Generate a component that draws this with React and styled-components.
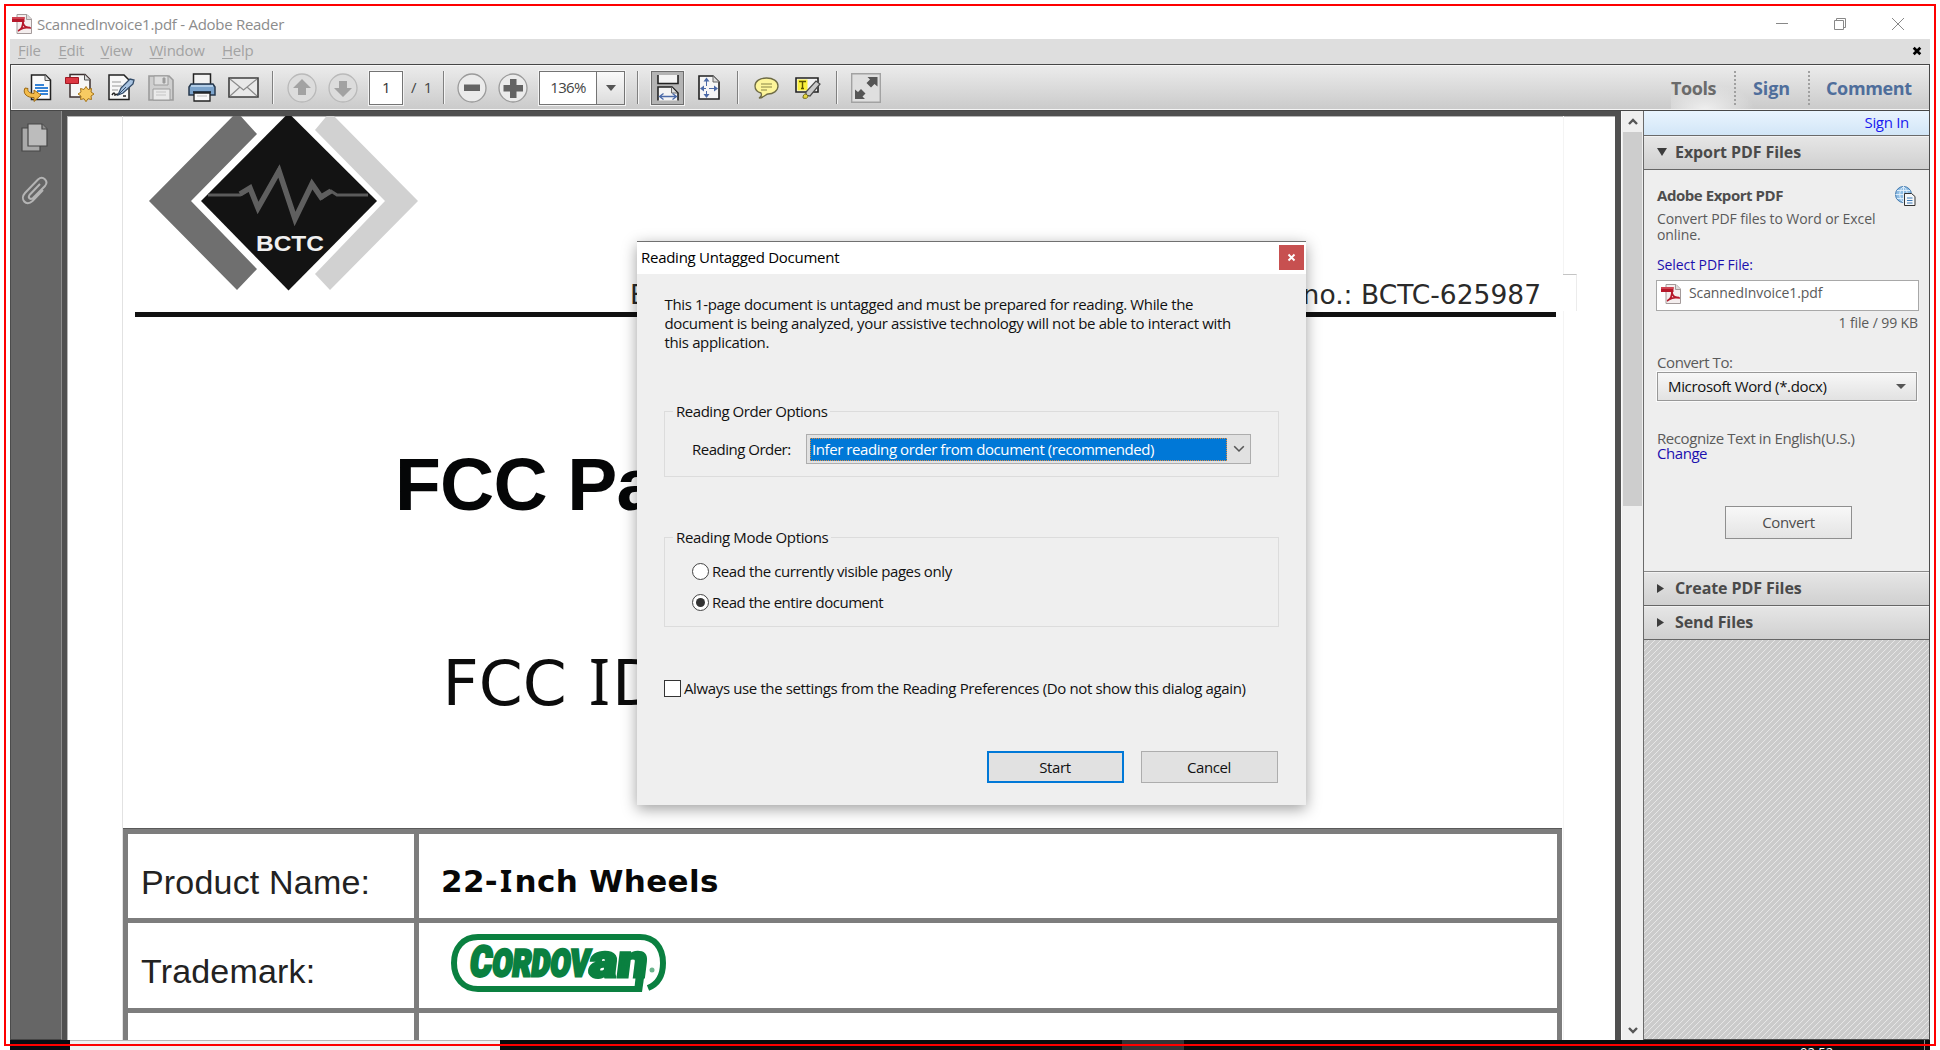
import React from 'react';
import styled, { createGlobalStyle } from 'styled-components';

const Global = createGlobalStyle`
  body { margin: 0; background: #fff; }
  * { box-sizing: border-box; }
  svg { display: block; flex: none; overflow: visible; }
`;

const ui = '"Open Sans", "Noto Sans", sans-serif';

const Screen = styled.div`
  position: relative;
  width: 1940px;
  height: 1050px;
  overflow: hidden;
  padding: 6px 10px 0;
  background: #fff;
  font: 15px/19px ${ui};
  letter-spacing: -0.37px;
  color: #111;
  white-space: nowrap;
`;

const RedFrame = styled.div`
  position: absolute;
  left: 4px;
  top: 4px;
  width: 1932px;
  height: 1042px;
  border: 2px solid #fe0000;
`;

const Window = styled.div`
  display: flex;
  flex-direction: column;
  width: 1920px;
  height: 1034px;
`;

const TitleBar = styled.div`
  display: flex;
  align-items: center;
  height: 33px;
  padding: 3px 26px 0 2px;
  color: #8c8c8c;
  letter-spacing: -0.28px;
`;
const TitleText = styled.span`
  margin-left: 5px;
  flex: 1;
`;
const WindowButtons = styled.div`
  display: flex;
  align-items: center;
  gap: 46px;
`;

const MenuBar = styled.div`
  display: flex;
  align-items: center;
  height: 25px;
  padding: 0 9px 1px 8px;
  background: #dedede;
  color: #a3a3a3;
`;
const MenuItem = styled.span`
  width: ${(p) => p.$w}px;
  letter-spacing: -0.25px;
  padding-bottom: 2px;
  u { text-decoration-thickness: 1px; text-underline-offset: 2px; }
`;
const CloseDoc = styled.svg`
  margin-left: auto;
`;

const Toolbar = styled.div`
  display: flex;
  align-items: center;
  height: 47px;
  border: 1px solid #474747;
  box-shadow: inset 1px 1px #f8f8f8, inset 0 -1px #f5f5f5;
  background: linear-gradient(#ececec, #cacaca);
  padding-left: 11px;
`;
const Tool = styled.div`
  display: flex;
  justify-content: center;
  align-items: center;
  width: ${(p) => p.$w || 30}px;
  height: 33px;
  margin-left: ${(p) => p.$gap || 0}px;
`;
const Divider = styled.div`
  width: 2px;
  height: 33px;
  margin-left: ${(p) => p.$gap}px;
  background: #808080;
  border-right: 1px solid #f4f4f4;
`;
const PageBox = styled.div`
  width: 34px;
  height: 34px;
  margin-left: ${(p) => p.$gap}px;
  border: 1px solid #747474;
  box-shadow: 0 0 0 1px #f3f3f3;
  background: #fff;
  text-align: center;
  line-height: 31px;
  color: #333;
`;
const PageCount = styled.span`
  margin-left: 8px;
  width: 24px;
  color: #444;
  word-spacing: 4px;
`;
const ZoomBox = styled.div`
  display: flex;
  width: 86px;
  height: 34px;
  margin-left: 11px;
  border: 1px solid #747474;
  box-shadow: 0 0 0 1px #f3f3f3;
  background: #fff;
  color: #444;
`;
const ZoomValue = styled.div`
  width: 57px;
  border-right: 1px solid #747474;
  text-align: center;
  line-height: 31px;
  letter-spacing: -0.7px;
`;
const ZoomArrow = styled.div`
  flex: 1;
  display: flex;
  align-items: center;
  justify-content: center;
  background: linear-gradient(#fafafa, #dcdcdc);
`;
const Pressed = styled.div`
  display: flex;
  align-items: center;
  justify-content: center;
  width: 33px;
  height: 34px;
  margin-left: 12px;
  border: 1px solid #6e6e6e;
  box-shadow: 0 0 0 1px #f3f3f3;
  background: #b4b4b4;
`;
const PaneTabs = styled.div`
  display: flex;
  align-items: center;
  margin-left: auto;
  height: 44px;
  background: radial-gradient(ellipse 50px 26px at 34px 44px, #f0f0f0, rgba(240, 240, 240, 0));
`;
const PaneTab = styled.div`
  width: ${(p) => p.$w}px;
  padding-left: ${(p) => p.$pad}px;
  height: 34px;
  line-height: 35px;
  font-size: 18px;
  font-weight: 700;
  letter-spacing: ${(p) => p.$ls}px;
  color: ${(p) => (p.$active ? '#6b6b6b' : '#4f6e9b')};
  border-left: ${(p) => (p.$active ? '0' : '2px dotted #a0a0a0')};
`;

const Workspace = styled.div`
  display: flex;
  height: 929px;
`;
const NavRail = styled.div`
  display: flex;
  flex-direction: column;
  align-items: center;
  width: 52px;
  padding: 11px 4px 0 0;
  gap: 24px;
  background: #666;
  border-left: 1px solid #4b4b4b;
  border-right: 1px solid #8d8d8d;
  border-bottom: 1px solid #444;
`;
const DocFrame = styled.div`
  display: flex;
  width: 1559px;
  border-style: solid;
  border-color: #505050;
  border-width: 5px 6px 0 5px;
  box-shadow: inset 1px 1px #b5b5b5;
  overflow: hidden;
  background: #fff;
  position: relative;
  padding-left: 55px;
`;
const Page = styled.div`
  width: 1442px;
  height: 924px;
  border-left: 1px solid #e2e2e2;
  border-right: 1px solid #f4f4f4;
  letter-spacing: 0;
`;
const Notch = styled.div`
  position: absolute;
  left: 1496px;
  top: 158px;
  width: 14px;
  height: 37px;
  background: #fff;
  border-top: 1px solid #c4c4c4;
  border-right: 1px solid #ececec;
`;
const Letterhead = styled.div`
  display: flex;
  height: 201px;
  margin: 0 7px 0 12px;
  padding-left: 14px;
  border-bottom: 5px solid #111;
`;
const ReportNo = styled.div`
  display: flex;
  flex: 1;
  justify-content: space-between;
  padding: 163px 15px 0 212px;
  font: 26.5px/32px "DejaVu Sans", sans-serif;
  color: #2a2a2a;
`;
const Heading = styled.div`
  margin: 122px 0 0 272px;
  font: 700 75px/90px "Liberation Sans", Arial, sans-serif;
  letter-spacing: -0.7px;
  color: #050607;
`;
const SubHeading = styled.div`
  margin: 114px 0 0 319.500px;
  height: 75px;
  font: 63px/75px "DejaVu Sans", sans-serif;
  color: #0c0c0c;
`;
const SerifI = styled.span`
  font-family: "Noto Sans", sans-serif;
  padding: 0 ${(p) => p.$pad}px;
`;
const SpecTable = styled.div`
  display: grid;
  grid-template-columns: 286px 1138px;
  grid-template-rows: 84px 85px 60px;
  gap: 5px;
  width: 1439px;
  margin: 110px 0 0 0;
  padding: 5px 5px 0 5px;
  background: #7d7d7d;
  border-top: 1px solid #5a5a5a;
`;
const Cell = styled.div`
  background: #fff;
  padding: 28px 0 0 ${(p) => (p.$value ? 22 : 13)}px;
  color: #222;
  font: 34px/40px "Liberation Sans", Arial, sans-serif;
  letter-spacing: 0.18px;
`;
const BoldValue = styled.div`
  margin-top: -1px;
  font: 700 31px/38px "DejaVu Sans", sans-serif;
  letter-spacing: 0.35px;
  color: #080808;
`;
const Brand = styled.div`
  margin: -17px 0 0 10px;
`;

const ScrollBar = styled.div`
  display: flex;
  flex-direction: column;
  align-items: center;
  width: 23px;
  background: #efefef;
  border-right: 1px solid #6a6a6a;
  border-left: 1px solid #fafafa;
`;
const ScrollArrow = styled.div`
  display: flex;
  align-items: center;
  justify-content: center;
  height: 21px;
`;
const ScrollThumb = styled.div`
  width: 19px;
  height: 374px;
  background: #cdcdcd;
  margin-bottom: auto;
`;

const TaskPane = styled.div`
  display: flex;
  flex-direction: column;
  width: 286px;
  background: #eee;
  border-right: 1px solid #4d4d4d;
  border-bottom: 1px solid #4d4d4d;
  color: #4d4d4d;
`;
const SignIn = styled.div`
  height: 25px;
  padding-right: 20px;
  text-align: right;
  line-height: 23px;
  color: #1a1af0;
  letter-spacing: -0.3px;
  background: linear-gradient(#e9f4fe, #d2e6f7);
  border-bottom: 1px solid #6a6a6a;
`;
const Section = styled.div`
  display: flex;
  align-items: center;
  gap: ${(p) => (p.$open ? 8 : 11)}px;
  flex: none;
  height: 34px;
  padding: 0 0 1px 13px;
  font-size: 16px;
  font-weight: 700;
  letter-spacing: -0.08px;
  color: #4a4a4a;
  background: linear-gradient(#e6e6e6, #d0d0d0);
  border-bottom: 1px solid #666;
  box-shadow: inset 0 1px #f2f2f2;
`;
const PaneBody = styled.div`
  display: flex;
  flex-direction: column;
  height: 402px;
  padding: 16px 11px 0 13px;
  border-bottom: 1px solid #8a8a8a;
`;
const PaneHead = styled.div`
  display: flex;
  justify-content: space-between;
  height: 25px;
  font-weight: 700;
  letter-spacing: -0.45px;
  padding-right: 2px;
`;
const Small = styled.div`
  font-size: 14px;
  line-height: 16px;
  letter-spacing: -0.1px;
  margin-top: ${(p) => p.$mt || 0}px;
  text-align: ${(p) => p.$align || 'left'};
  color: ${(p) => (p.$link ? '#1c10ae' : '#5a5a5a')};
`;
const Label = styled.div`
  line-height: 15px;
  letter-spacing: ${(p) => p.$ls || -0.42}px;
  margin-top: ${(p) => p.$mt || 0}px;
  color: ${(p) => (p.$link ? '#1c10ae' : '#5a5a5a')};
`;
const FileBox = styled.div`
  display: flex;
  gap: 8px;
  height: 31px;
  width: 263px;
  margin: 7px 0 0 -1px;
  padding: 3px 4px;
  border: 1px solid #a8a8a8;
  background: #fff;
`;
const FormatSelect = styled.div`
  display: flex;
  align-items: center;
  justify-content: space-between;
  width: 260px;
  height: 29px;
  margin: 2px 0 0 0;
  padding: 0 10px 1px 10px;
  border: 1px solid #989898;
  box-shadow: 0 0 0 1px #fafafa;
  background: linear-gradient(#f7f7f7, #e2e2e2);
  color: #111;
  letter-spacing: -0.34px;
`;
const ConvertButton = styled.div`
  width: 127px;
  height: 33px;
  margin: 45px 0 0 68px;
  border: 1px solid #8f8f8f;
  background: linear-gradient(#f8f8f8, #e4e4e4);
  text-align: center;
  line-height: 31px;
`;
const Hatch = styled.div`
  flex: 1;
  background: repeating-linear-gradient(135deg, #cbcbcb 0 2.9px, #e6e6e6 3.3px 3.9px, #cbcbcb 4.243px);
`;

const Taskbar = styled.div`
  display: flex;
  width: 1920px;
  height: 10px;
  background: #0b0b0c;
  overflow: hidden;
`;
const TaskStart = styled.div` width: 60px; background: #080b12; `;
const TaskSearch = styled.div` width: 430px; background: #f1f1f1; border-top: 1px solid #b8b8b8; `;
const TaskActive = styled.div` width: 62px; margin-left: 622px; background: #343436; `;
const Clock = styled.div`
  margin-left: 616px;
  width: 124px;
  font-size: 13px;
  line-height: 18px;
  padding-top: 3px;
  letter-spacing: 0;
  color: #fff;
`;
const PeekLine = styled.div` width: 1px; background: #8a8a8a; `;

const Dialog = styled.div`
  position: absolute;
  left: 637px;
  top: 241px;
  width: 669px;
  height: 564px;
  display: flex;
  flex-direction: column;
  background: #efefef;
  border-top: 1px solid #707070;
  box-shadow: 0 4px 14px rgba(0, 0, 0, 0.38);
`;
const DialogTitle = styled.div`
  display: flex;
  justify-content: space-between;
  height: 32px;
  padding: 3px 2px 0 4px;
  background: #fff;
  color: #000;
  line-height: 25px;
  letter-spacing: -0.27px;
`;
const CloseBox = styled.div`
  display: flex;
  align-items: center;
  justify-content: center;
  width: 25px;
  height: 25px;
  background: #c75050;
`;
const DialogBody = styled.div`
  display: flex;
  flex-direction: column;
  padding: 21px 27px 0 27px;
`;
const Message = styled.div`
  height: 107px;
  padding-left: 0.5px;
  letter-spacing: -0.35px;
`;
const Group = styled.fieldset`
  height: ${(p) => p.$h}px;
  margin: 0 0 ${(p) => p.$mb}px;
  padding: ${(p) => p.$pt}px 0 0 27px;
  border: 1px solid #dcdcdc;
  legend {
    margin-left: -19px;
    padding: 0 3px;
    line-height: 19px;
    letter-spacing: ${(p) => p.$ls}px;
  }
`;
const FieldRow = styled.div`
  display: flex;
  align-items: center;
`;
const FieldLabel = styled.span`
  width: 114px;
  letter-spacing: -0.5px;
`;
const Combo = styled.div`
  display: flex;
  align-items: center;
  width: 445px;
  height: 30px;
  padding: 2px 5px 2px 3px;
  border: 1px solid #adadad;
  background: #e1e1e1;
  justify-content: space-between;
`;
const ComboValue = styled.div`
  width: 417px;
  height: 23px;
  padding-left: 1px;
  border: 1px dotted #e08a3c;
  background: #0078d7;
  color: #fff;
  line-height: 20px;
  letter-spacing: -0.42px;
`;
const Choice = styled.div`
  display: flex;
  align-items: center;
  gap: 3px;
  height: 21px;
  margin-bottom: ${(p) => p.$mb || 0}px;
  letter-spacing: ${(p) => p.$ls || -0.41}px;
`;
const Radio = styled.span`
  display: flex;
  align-items: center;
  justify-content: center;
  width: 17px;
  height: 17px;
  border: 1px solid #444;
  border-radius: 50%;
  background: #fff;
  &::after {
    content: '';
    width: 9px;
    height: 9px;
    border-radius: 50%;
    background: ${(p) => (p.$on ? '#333' : 'transparent')};
  }
`;
const Check = styled.span`
  width: 17px;
  height: 17px;
  border: 1px solid #333;
  background: #fff;
`;
const Buttons = styled.div`
  display: flex;
  justify-content: flex-end;
  gap: 17px;
  margin-top: 52px;
  padding-right: 1px;
`;
const Button = styled.div`
  width: 137px;
  height: 32px;
  padding-right: 1px;
  border: ${(p) => (p.$primary ? '2px solid #0078d7' : '1px solid #adadad')};
  background: #e1e1e1;
  text-align: center;
  line-height: ${(p) => (p.$primary ? 28 : 30)}px;
  letter-spacing: -0.4px;
`;

const PdfIcon = ({ s = 20 }) => (
  <svg width={s} height={s} viewBox="0 0 20 20">
    <path d="M5 .5h10l4.500 4.500v14.500H5z" fill="#f4eeee" stroke="#a39a9a" />
    <path d="M14.500.5v5h5" fill="#ddd" stroke="#a39a9a" />
    <path d="M0 3h12.500v5H0z" fill="#b5182a" />
    <path d="M0 3h12.500v2H0z" fill="#cf4452" />
    <path d="M6 17c3-1 5-5 5-10M11 8c0 4 3 6 8 6M7 16c3-2 7-3 11-2.500" fill="none" stroke="#b5182a" strokeWidth="1.700" />
  </svg>
);

const ExportIcon = () => (
  <svg width="29" height="28" viewBox="0 0 29 28">
    <path d="M8.500 1h14l5 5v19.500h-19z" fill="#fbfbfb" stroke="#222" strokeWidth="1.500" />
    <path d="M22 1v5.500h5" fill="#ddd" stroke="#555" />
    <path d="M12 11h9M12 14h13M14 17h11M17 20h8" stroke="#3583d6" strokeWidth="2" />
    <path d="M2 14c-3 6 3 10 9 9.500v4l7-6.500-7-5v3.500c-4 0-7-2-6-5z" fill="#f3bb49" stroke="#9a6813" />
  </svg>
);
const CreateIcon = () => (
  <svg width="29" height="29" viewBox="0 0 29 29">
    <path d="M5 1.500h15l5 5V24H5z" fill="#f6f6f6" stroke="#3d3030" strokeWidth="1.500" />
    <path d="M19.500 1.500V7H25" fill="#ddd" stroke="#555" />
    <path d="M.5 4.500h13v6H.5z" fill="#dc3742" stroke="#a01822" />
    <path d="M21 13.500l2 3 3.500-1 -.500 3.500 3 2-3 2 .5 3.500-3.500-.8-2 3-2-3-3.500.8.500-3.500-3-2 3-2-.5-3.500 3.500 1z" fill="#f8cb62" stroke="#a77418" />
  </svg>
);
const SignIcon = () => (
  <svg width="27" height="27" viewBox="0 0 27 27">
    <path d="M1 1h15l5 5v19.500H1z" fill="#f8f8f8" stroke="#222" strokeWidth="1.500" />
    <path d="M4 8h9M4 12h10M4 16h6" stroke="#b8b8b8" strokeWidth="1.300" />
    <path d="M4 21c2-3 3-2 3 0l3-1M15 22h3" fill="none" stroke="#222" strokeWidth="1.500" />
    <path d="M10 21l3-7L22 5l4 1-1 4-10 9z" fill="#a9c4e2" stroke="#334c69" strokeWidth="1.300" />
    <path d="M10 21l8-8" stroke="#334c69" />
  </svg>
);
const SaveIcon = () => (
  <svg width="26" height="26" viewBox="0 0 26 26" fill="#cfcfcf" stroke="#9c9c9c">
    <path d="M1 1h20l4 4v20H1z" strokeWidth="1.600" />
    <path d="M6 1h14v9H6z" fill="#dedede" />
    <path d="M15 3h2v5h-2z" fill="#9c9c9c" />
    <path d="M5 14h17v11H5z" fill="#eaeaea" />
    <path d="M8 17h10M8 20h10" stroke="#c4c4c4" />
  </svg>
);
const PrintIcon = () => (
  <svg width="28" height="29" viewBox="0 0 28 29">
    <path d="M5.500 1h17v13h-17z" fill="#f2f2f2" stroke="#222" strokeWidth="1.500" />
    <path d="M3 11h22l2 3v8H1v-8z" fill="#7ba3cb" stroke="#27394d" strokeWidth="1.500" />
    <path d="M3 13h22" stroke="#c5dbf0" strokeWidth="1.500" />
    <path d="M5 18h18v2H5z" fill="#26384b" />
    <path d="M6 20h16v8H6z" fill="#fafafa" stroke="#222" strokeWidth="1.300" />
    <path d="M9 23h10" stroke="#bbb" />
  </svg>
);
const MailIcon = () => (
  <svg width="31" height="21" viewBox="0 0 31 21">
    <path d="M1 1h29v19H1z" fill="#e9e9e9" stroke="#3f3f3f" strokeWidth="1.600" />
    <path d="M2 19l10-9M29 19l-10-9M2 2l13.500 11L29 2" fill="none" stroke="#8b8b8b" strokeWidth="1.200" />
  </svg>
);
const RoundIcon = ({ dim, children }) => (
  <svg width="30" height="30" viewBox="0 0 30 30">
    <circle cx="15" cy="15" r="14" fill={dim ? '#dcdcdc' : '#ebebeb'} stroke={dim ? '#b9b9b9' : '#9a9a9a'} strokeWidth="1.300" />
    {children}
  </svg>
);
const FitWidthIcon = () => (
  <svg width="22" height="26" viewBox="0 0 22 26">
    <path d="M1 0v8.500h20V0" fill="#f4f4f4" stroke="#222" strokeWidth="1.600" />
    <path d="M1 25.500V12h14l6 6v7.500" fill="#f4f4f4" stroke="#222" strokeWidth="1.600" />
    <path d="M14.500 12v6H20" fill="#ddd" stroke="#666" />
    <path d="M3 21.500h16M6.500 18.500l-4 3 4 3M15.500 18.500l4 3-4 3" fill="none" stroke="#4b6aa8" strokeWidth="1.300" />
  </svg>
);
const FitPageIcon = () => (
  <svg width="22" height="25" viewBox="0 0 22 25">
    <path d="M1 1h14l6 6v17H1z" fill="#f6f6f6" stroke="#222" strokeWidth="1.600" />
    <path d="M15 1v6h6" fill="#ddd" stroke="#666" />
    <g fill="#4b6aa8">
      <path d="M8.500 2.500l3 4h-6zM8.500 23l3-4h-6zM2 13.500l4-3v6zM20 13.500l-4-3v6z" />
      <path d="M8 6h1v5H8zM8 16h1v3H8zM5 13h3v1H5zM11 13h5v1h-5z" />
    </g>
  </svg>
);
const CommentIcon = () => (
  <svg width="25" height="22" viewBox="0 0 25 22">
    <path d="M12.500 1C19 1 24 4 24 9s-5 8-10 8c-2 0-4 4-9 4 2-1 3-3 2-5-4-1-6-4-6-7 0-5 5-8 11.500-8z" fill="#fdf59a" stroke="#6e6b45" strokeWidth="1.300" />
    <path d="M7 7h11M7 10h11M7 13h6" stroke="#8a8546" strokeWidth="1.200" />
  </svg>
);
const HighlightIcon = () => (
  <svg width="26" height="24" viewBox="0 0 26 24">
    <path d="M1 2h22v14H1z" fill="#f3f3f3" stroke="#222" strokeWidth="1.600" />
    <path d="M2.500 3.500h10v11h-10z" fill="#fbf03a" />
    <path d="M4 5.500h7M7.500 5.500v7M6 12.500h3" stroke="#5c5500" strokeWidth="1.400" />
    <path d="M11 16L21 5l4 3-10 12-4-1z" fill="#c9c9c9" stroke="#4b4b4b" strokeWidth="1.200" />
    <path d="M8 22c0-3 1-4 3-4l2 2c0 2-2 3-5 2z" fill="#e8d640" stroke="#77701a" />
  </svg>
);
const FullScreenIcon = () => (
  <svg width="30" height="30" viewBox="0 0 30 30">
    <path d="M.7.700h28.600v28.600H.7z" fill="#dfdfdf" stroke="#a2a2a2" strokeWidth="1.400" />
    <path d="M26.500 4v9.500l-3-2.500-3.500 3.500-4.500-4.500 3.500-3.500-2.500-2.500zM4 26v-9.500l3 2.500 3-3 4.500 4.500-3 3 2.500 2.500z" fill="#555" />
  </svg>
);
const PagesIcon = () => (
  <svg width="27" height="30" viewBox="0 0 27 30" fill="#a9a9a9" stroke="#474747" strokeWidth="1.200">
    <path d="M1 6h18v23H1z" />
    <path d="M7 2h14l5 5v17H7z" fill="#bcbcbc" />
    <path d="M21 2v5h5" fill="#8e8e8e" />
  </svg>
);
const ClipIcon = () => (
  <svg width="27" height="30" viewBox="0 0 27 30">
    <path
      d="M19 8L8.500 19c-2 3 1 5 3.500 3L24 10c4-5-2-11-7-6.500L4 17C-1.500 23 5 31 11.500 25L22 14"
      fill="none" stroke="#b4b4b4" strokeWidth="2"
    />
  </svg>
);
const GlobeIcon = () => (
  <svg width="21" height="20" viewBox="0 0 21 20">
    <circle cx="8.500" cy="8.500" r="8" fill="#8fbde4" stroke="#4279ae" />
    <path d="M8.500.5v16M.5 8.500h16M2 4.500h13M2 12.500h13M8.500.5c-5 4-5 12 0 16M8.500.5c5 4 5 12 0 16" fill="none" stroke="#e4f2fc" strokeWidth=".9" />
    <path d="M9.500 7.500h7l3.500 3v9H9.500z" fill="#f4f7fa" stroke="#333" />
    <path d="M12 12h5.500M12 14.500h5.500M12 17h5.500" stroke="#3c7ab7" />
  </svg>
);
const Chevron = ({ up, w = 10, c = '#555', t = 2.4 }) => (
  <svg width={w} height={w * 0.6} viewBox="0 0 10 6">
    <path d={up ? 'M1 5l4-4 4 4' : 'M1 1l4 4 4-4'} fill="none" stroke={c} strokeWidth={t} />
  </svg>
);
const Triangle = ({ down, w = 11, h = 8, c = '#3c3c3c' }) => (
  <svg width={w} height={h} viewBox="0 0 10 10" preserveAspectRatio="none">
    <path d={down ? 'M0 0h10L5 10z' : 'M0 0v10l10-5z'} fill={c} />
  </svg>
);

const LabLogo = () => (
  <svg width="269" height="175" viewBox="149 116 269 175">
    <path d="M237 112l20 22-66 67 66 68-20 21-88-89z" fill="#6f6f6f" />
    <path d="M330 112l-15 18 70 71-70 73 15 16 88-89z" fill="#d1d1d1" />
    <path d="M288.500 113l88.500 88-88.500 89.500L201 201z" fill="#131313" />
    <path d="M208 195h32l10-6 8 19 21-39 16 50 17-34 10 13 9-7 6 4h31" fill="none" stroke="#5b5b5b" strokeWidth="3" />
    <path d="M240 194l10-6 8 20 21-37 16 48 17-35 9 13 10-6" fill="none" stroke="#5f5f5f" strokeWidth="5.500" />
    <text x="256" y="251" textLength="68" lengthAdjust="spacingAndGlyphs" fontFamily="Liberation Sans, Arial, sans-serif" fontWeight="700" fontSize="22" fill="#f0f0f0">BCTC</text>
  </svg>
);
const CordovanLogo = () => (
  <svg width="216" height="59" viewBox="0 0 216 59">
    <path d="M197 54C207 50 212 41 212 29 212 13 203 3 189 3H27C12 3 3 14 3 29s9 26 24 26h160" fill="none" stroke="#0a8040" strokeWidth="6" />
    <g transform="skewX(-7)" fontFamily="Roboto, sans-serif" fontWeight="900" fill="#0a8040" stroke="#0a8040" strokeWidth="3">
      <text x="23" y="42.500" fontSize="42" textLength="22" lengthAdjust="spacingAndGlyphs">C</text>
      <text x="45.500" y="42.500" fontSize="37" textLength="97" lengthAdjust="spacingAndGlyphs">ORDOV</text>
      <text x="142" y="42.500" fontSize="46" textLength="58" lengthAdjust="spacingAndGlyphs">an</text>
    </g>
    <path d="M186 30h9l-4 28h-8z" fill="#0a8040" />
    <circle cx="201" cy="36" r="2.500" fill="#6cb48d" />
  </svg>
);

const menus = [['File', 40.5], ['Edit', 42], ['View', 49], ['Window', 72.5], ['Help', 40]];

export default function App() {
  return (
    <Screen>
      <Global />
      <Window>
        <TitleBar>
          <PdfIcon />
          <TitleText>ScannedInvoice1.pdf - Adobe Reader</TitleText>
          <WindowButtons>
            <svg width="12" height="12" viewBox="0 0 12 12"><path d="M0 5.500h12" stroke="#888" /></svg>
            <svg width="12" height="12" viewBox="0 0 12 12" fill="none" stroke="#888"><path d="M.5 2.500h9v9h-9zM2.500 2.500v-2h9v9h-2" /></svg>
            <svg width="12" height="12" viewBox="0 0 12 12"><path d="M0 0l12 12M12 0L0 12" stroke="#888" /></svg>
          </WindowButtons>
        </TitleBar>
        <MenuBar>
          {menus.map(([name, w]) => (
            <MenuItem key={name} $w={w}><u>{name[0]}</u>{name.slice(1)}</MenuItem>
          ))}
          <CloseDoc width="8" height="8" viewBox="0 0 8 8"><path d="M.7.700l6.600 6.600M7.300.7L.7 7.300" stroke="#000" strokeWidth="2.700" /></CloseDoc>
        </MenuBar>
        <Toolbar>
          <Tool $w={30}><ExportIcon /></Tool>
          <Tool $gap={12}><CreateIcon /></Tool>
          <Tool $gap={12}><SignIcon /></Tool>
          <Tool $gap={10}><SaveIcon /></Tool>
          <Tool $gap={11}><PrintIcon /></Tool>
          <Tool $gap={11}><MailIcon /></Tool>
          <Divider $gap={14} />
          <Tool $gap={13}><RoundIcon dim><path d="M15 6l9 9h-5v7h-8v-7H6z" fill="#a2a2a2" /></RoundIcon></Tool>
          <Tool $gap={11}><RoundIcon dim><path d="M15 24l9-9h-5V8h-8v7H6z" fill="#a2a2a2" /></RoundIcon></Tool>
          <PageBox $gap={11}>1</PageBox>
          <PageCount>/ 1</PageCount>
          <Divider $gap={8} />
          <Tool $gap={12}><RoundIcon><path d="M7 11.500h16v6.500H7z" fill="#636363" /></RoundIcon></Tool>
          <Tool $gap={11}><RoundIcon><path d="M12 6h6.500v6H25v6.500h-6.500V25H12v-6.500H5.500V12H12z" fill="#636363" /></RoundIcon></Tool>
          <ZoomBox>
            <ZoomValue>136%</ZoomValue>
            <ZoomArrow><Triangle down w={10} h={6} c="#555" /></ZoomArrow>
          </ZoomBox>
          <Divider $gap={12} />
          <Pressed><FitWidthIcon /></Pressed>
          <Tool $gap={10}><FitPageIcon /></Tool>
          <Divider $gap={13} />
          <Tool $gap={12}><CommentIcon /></Tool>
          <Tool $gap={12}><HighlightIcon /></Tool>
          <Divider $gap={13} />
          <Tool $gap={13}><FullScreenIcon /></Tool>
          <PaneTabs>
            <PaneTab $active $w={63} $pad={0} $ls={-0.4}>Tools</PaneTab>
            <PaneTab $w={74} $pad={17} $ls={-0.1}>Sign</PaneTab>
            <PaneTab $w={121} $pad={16} $ls={-0.35}>Comment</PaneTab>
          </PaneTabs>
        </Toolbar>
        <Workspace>
          <NavRail><PagesIcon /><ClipIcon /></NavRail>
          <DocFrame>
            <Page>
              <Letterhead>
                <LabLogo />
                <ReportNo><span>E</span><span>no.: BCTC-625987</span></ReportNo>
              </Letterhead>
              <Heading>FCC Pa</Heading>
              <SubHeading>FCC <SerifI $pad={2}>I</SerifI>D</SubHeading>
              <SpecTable>
                <Cell>Product Name:</Cell>
                <Cell $value><BoldValue>22-<SerifI $pad={2}>I</SerifI>nch Wheels</BoldValue></Cell>
                <Cell>Trademark:</Cell>
                <Cell $value><Brand><CordovanLogo /></Brand></Cell>
                <Cell />
                <Cell />
              </SpecTable>
            </Page>
            <Notch />
          </DocFrame>
          <ScrollBar>
            <ScrollArrow><Chevron up /></ScrollArrow>
            <ScrollThumb />
            <ScrollArrow><Chevron /></ScrollArrow>
          </ScrollBar>
          <TaskPane>
            <SignIn>Sign In</SignIn>
            <Section $open><Triangle down w={10} h={8} />Export PDF Files</Section>
            <PaneBody>
              <PaneHead>Adobe Export PDF<GlobeIcon /></PaneHead>
              <Small>Convert PDF files to Word or Excel<br />online.</Small>
              <Small $mt={14} $link>Select PDF File:</Small>
              <FileBox><PdfIcon /><Small $mt={1}>ScannedInvoice1.pdf</Small></FileBox>
              <Small $mt={4} $align="right">1 file / 99 KB</Small>
              <Label $mt={24}>Convert To:</Label>
              <FormatSelect>Microsoft Word (*.docx)<Triangle down w={10} h={5} c="#555" /></FormatSelect>
              <Label $mt={30}>Recognize Text in English(U.S.)</Label>
              <Label $link $ls={-0.45}>Change</Label>
              <ConvertButton>Convert</ConvertButton>
            </PaneBody>
            <Section><Triangle w={7} h={9} />Create PDF Files</Section>
            <Section><Triangle w={7} h={9} />Send Files</Section>
            <Hatch />
          </TaskPane>
        </Workspace>
      </Window>
      <Taskbar>
        <TaskStart />
        <TaskSearch />
        <TaskActive />
        <Clock>02:52</Clock>
        <PeekLine />
      </Taskbar>

      <Dialog>
        <DialogTitle>
          Reading Untagged Document
          <CloseBox>
            <svg width="7" height="7" viewBox="0 0 7 7"><path d="M.5.500l6 6M6.500.5l-6 6" stroke="#fff" strokeWidth="1.900" /></svg>
          </CloseBox>
        </DialogTitle>
        <DialogBody>
          <Message>
            This 1-page document is untagged and must be prepared for reading. While the<br />
            document is being analyzed, your assistive technology will not be able to interact with<br />
            this application.
          </Message>
          <Group $h={75} $mb={51} $pt={13} $ls={-0.46}>
            <legend>Reading Order Options</legend>
            <FieldRow>
              <FieldLabel>Reading Order:</FieldLabel>
              <Combo>
                <ComboValue>Infer reading order from document (recommended)</ComboValue>
                <Chevron w={12} c="#555" t={1.3} />
              </Combo>
            </FieldRow>
          </Group>
          <Group $h={99} $mb={51} $pt={14} $ls={-0.36}>
            <legend>Reading Mode Options</legend>
            <Choice $mb={10}><Radio />Read the currently visible pages only</Choice>
            <Choice $ls={-0.48}><Radio $on />Read the entire document</Choice>
          </Group>
          <Choice $ls={-0.37}><Check />Always use the settings from the Reading Preferences (Do not show this dialog again)</Choice>
          <Buttons>
            <Button $primary>Start</Button>
            <Button>Cancel</Button>
          </Buttons>
        </DialogBody>
      </Dialog>
      <RedFrame />
    </Screen>
  );
}
